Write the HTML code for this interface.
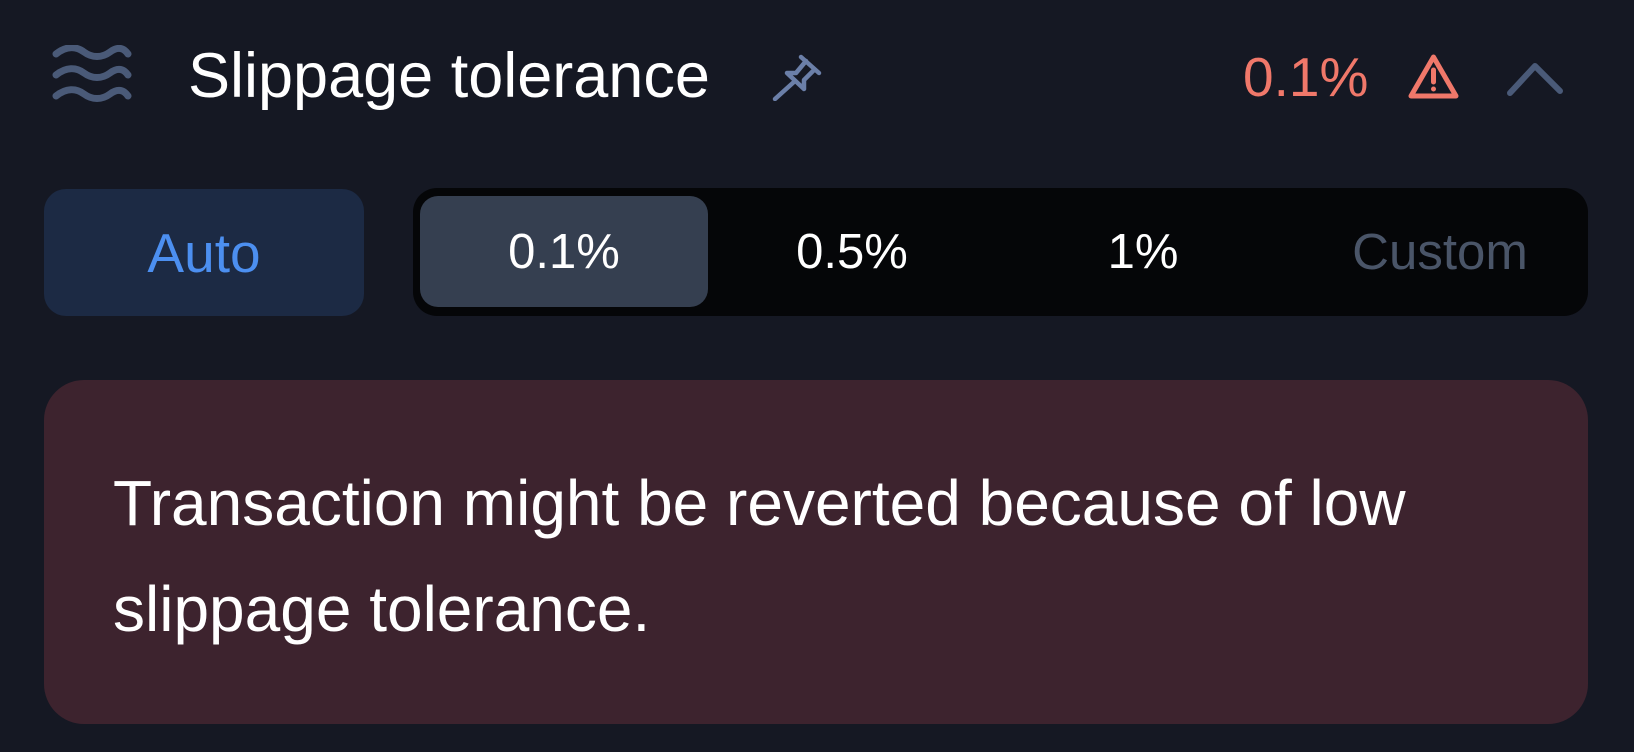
<!DOCTYPE html>
<html><head><meta charset="utf-8"><style>
html,body{margin:0;padding:0;width:1634px;height:752px;background:#151823;overflow:hidden;font-family:"Liberation Sans",Arial,sans-serif;}
.abs{position:absolute;}
.title{left:188px;top:36px;font-size:63px;color:#fff;line-height:80px;white-space:nowrap;}
.val{left:1243px;top:42px;font-size:55px;color:#f0786a;line-height:70px;}
.auto{left:44px;top:189px;width:320px;height:127px;border-radius:22px;background:#1c2a44;color:#4c8ff0;font-size:55px;display:flex;align-items:center;justify-content:center;}
.seg{left:413px;top:188px;width:1175px;height:128px;border-radius:24px;background:#050608;}
.sel{left:420px;top:196px;width:288px;height:111px;border-radius:18px;background:#353f50;}
.opt{top:196px;height:111px;font-size:49px;display:flex;align-items:center;justify-content:center;width:280px;color:#fff;}
.banner{left:44px;top:380px;width:1544px;height:344px;border-radius:40px;background:#3d232e;}
.btext{left:113px;top:450px;font-size:64px;line-height:106px;color:#fff;white-space:nowrap;}
</style></head><body>
<svg class="abs" style="left:52px;top:45px" width="80" height="60" viewBox="0 0 80 60" fill="none" stroke="#4a5a78" stroke-width="7" stroke-linecap="round">
<path d="M4 9 C14 1,24 1,32 7 S50 13,58 7 S72 3,76 9"/>
<path d="M4 30 C14 22,24 22,32 28 S50 34,58 28 S72 24,76 30"/>
<path d="M4 51 C14 43,24 43,32 49 S50 55,58 49 S72 45,76 51"/>
</svg>
<div class="abs title">Slippage tolerance</div>
<svg class="abs" style="left:771px;top:54px" width="52" height="47" viewBox="0 0 52 47" fill="none" stroke="#6b7fa8" stroke-width="4.5" stroke-linecap="round" stroke-linejoin="round">
<path d="M30 3 L48 19"/><path d="M35 7 L25 19 L16 19 L33 35 L33 26 L43 16"/><path d="M24 27 L4 45"/>
</svg>
<div class="abs val">0.1%</div>
<svg class="abs" style="left:1407px;top:53px" width="53" height="47" viewBox="0 0 53 47" fill="none" stroke="#f0786a" stroke-width="5" stroke-linejoin="round">
<path d="M26.5 4 L49 43 L4 43 Z"/>
<path d="M26.5 17 L26.5 29" stroke-linecap="round"/>
<circle cx="26.5" cy="36" r="1.5" fill="#f0786a" stroke-width="2"/>
</svg>
<svg class="abs" style="left:1506px;top:60px" width="58" height="38" viewBox="0 0 58 38" fill="none" stroke="#4a5a78" stroke-width="6" stroke-linecap="round" stroke-linejoin="round">
<path d="M4 33 L29 6 L54 31"/>
</svg>
<div class="abs auto">Auto</div>
<div class="abs seg"></div>
<div class="abs sel"></div>
<div class="abs opt" style="left:424px">0.1%</div>
<div class="abs opt" style="left:712px">0.5%</div>
<div class="abs opt" style="left:1003px">1%</div>
<div class="abs opt" style="left:1300px;color:#4a5568;font-size:51px">Custom</div>
<div class="abs banner"></div>
<div class="abs btext">Transaction might be reverted because of low<br>slippage tolerance.</div>
</body></html>
